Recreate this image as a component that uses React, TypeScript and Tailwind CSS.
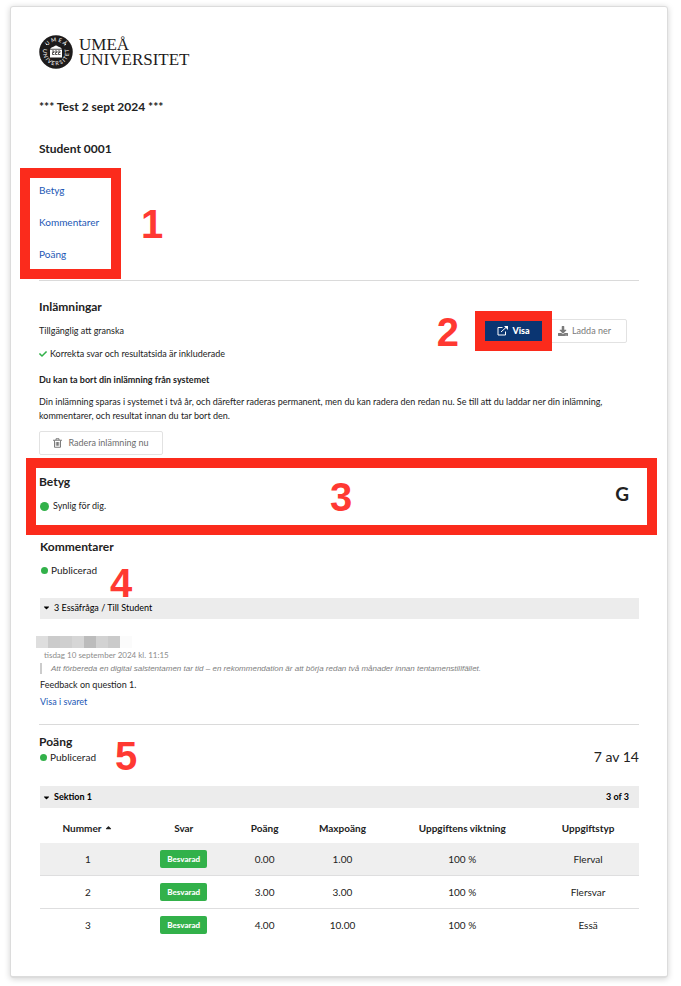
import type { ReactNode } from "react";
import { FaCaretDown, FaCaretUp, FaCheck, FaDownload } from "react-icons/fa";

const rows = [
  { nr: "1", points: "0.00", max: "1.00", weight: "100 %", type: "Flerval", cls: "bg-[#efefef] *:border-[#dededf]" },
  { nr: "2", points: "3.00", max: "3.00", weight: "100 %", type: "Flersvar", cls: "*:border-[#dededf]" },
  { nr: "3", points: "4.00", max: "10.00", weight: "100 %", type: "Essä", cls: "*:border-transparent" },
];

const pixels = ["bg-[#dedede]", "bg-[#cbcbcb]", "bg-[#cfcfcf]", "bg-[#d6d6d6]", "bg-[#bcbcbc]", "bg-[#d2d2d2]", "bg-[#cacaca]", "bg-[#fbfbfb]"];

function Seal() {
  return (
    <svg viewBox="0 0 68 68" className="size-[34px] shrink-0" role="img" aria-label="Umeå universitet">
      <defs>
        <path id="arcTop" d="M13 34a21 21 0 0 1 42 0" />
        <path id="arcBottom" d="M10.700 23a26 26 0 1 0 46.600 0" />
      </defs>
      <circle cx="34" cy="34" r="33.5" fill="#1d1b1b" />
      <text fill="#fff" fontSize="11" fontFamily="Lato, sans-serif" textAnchor="middle">
        <textPath href="#arcTop" startOffset="50%">U M E Å</textPath>
      </text>
      <text fill="#fff" fontSize="11" fontFamily="Lato, sans-serif" textAnchor="middle">
        <textPath href="#arcBottom" startOffset="50%">U N I V E R S I T E T</textPath>
      </text>
      <path d="M22 28q2-4 8-5 4-4 8 0 6 1 8 5v17H22z" fill="#fff" />
      <path d="M22 28.500h24M26 32h4v3h-3v4h4M32 32h4v3h-3v4h4M38 32h4v3h-3v4h4" stroke="#1d1b1b" strokeWidth="1.500" fill="none" />
      <circle cx="15" cy="19" r="1.200" fill="#fff" />
      <circle cx="53" cy="19" r="1.200" fill="#fff" />
    </svg>
  );
}

function TrashIcon() {
  return (
    <svg viewBox="0 0 18 20" className="h-[10px] w-[9px]" fill="none" stroke="currentColor" strokeWidth="1.800" aria-hidden="true">
      <path d="M0 4.500h18M6 4V1.500h6V4M3 5v13.500h12V5M6.500 8v7.500M9 8v7.500M11.500 8v7.500" />
    </svg>
  );
}

function OpenIcon() {
  return (
    <svg viewBox="0 0 22 20" className="h-[10px] w-[11px]" fill="none" stroke="currentColor" strokeWidth="2" aria-hidden="true">
      <path d="M11 3H2v15h15v-7M8 12 19 2" />
      <path d="M14 0h8v8z" fill="currentColor" stroke="none" />
    </svg>
  );
}

function Mark({ className, children }: { className: string; children: ReactNode }) {
  return (
    <span className={`absolute font-[Liberation_Sans,Arial,sans-serif] text-[40px] leading-[40px] font-bold text-[#ff3932] ${className}`}>
      {children}
    </span>
  );
}

function Frame({ className }: { className: string }) {
  return <div aria-hidden="true" className={`pointer-events-none absolute border-10 border-[#fb2b1c] ${className}`} />;
}

function Status({ children }: { children: ReactNode }) {
  return (
    <p className="flex items-center gap-[3px] pl-px text-[10px]">
      <span className="size-[7px] rounded-full bg-[#32b14a]" />
      {children}
    </p>
  );
}

export default function App() {
  return (
    <div className="bg-white pt-[6px] pr-[13px] pb-[9px] pl-[10px] font-[Lato,sans-serif] text-[9px] leading-4 text-[#222]">
      <main className="rounded-[3px] border border-b-2 border-[#dcdcdc] px-7 pt-7 pb-[34px] shadow-[0_1px_6px_rgba(0,0,0,0.18)]">
        <header>
          <div className="flex items-center gap-[6px]">
            <Seal />
            <div className="font-[Liberation_Serif,serif] text-[17px] leading-[15px] text-[#1d1b1b]">
              UMEÅ
              <br />
              UNIVERSITET
            </div>
          </div>
          <h1 className="mt-[30px] text-[12px] font-bold">*** Test 2 sept 2024 ***</h1>
          <h2 className="mt-[26px] text-[12px] font-bold">Student 0001</h2>
        </header>

        <nav className="relative mt-[25px] flex flex-col items-start gap-4 text-[10px] text-[#1c57b5]">
          <a href="#betyg">Betyg</a>
          <a href="#kommentarer">Kommentarer</a>
          <a href="#poang">Poäng</a>
          <Frame className="-top-[14px] -left-[19px] h-[111px] w-[101px]" />
          <Mark className="top-[22px] left-[102px]">1</Mark>
        </nav>

        <hr className="mt-[18px] border-[#dadada]" />

        <section className="relative mt-[18px]">
          <h2 className="text-[12px] font-bold">Inlämningar</h2>
          <p className="mt-2">Tillgänglig att granska</p>
          <p className="mt-[7px] flex items-center gap-[3px]">
            <FaCheck className="size-2 text-[#32b14a]" />
            Korrekta svar och resultatsida är inkluderade
          </p>
          <h3 className="mt-[10px] font-bold">Du kan ta bort din inlämning från systemet</h3>
          <p className="mt-[7px] leading-[14px]">
            Din inlämning sparas i systemet i två år, och därefter raderas permanent, men du kan radera den redan nu. Se till att du laddar ner din inlämning, kommentarer, och resultat innan du tar bort den.
          </p>
          <button className="mt-2 flex h-6 w-[124px] items-center justify-center gap-[6px] rounded-[2px] border border-[#e2e2e2] text-[#6d6d6d]">
            <TrashIcon />
            Radera inlämning nu
          </button>
          <div className="absolute top-5 right-3 flex items-center">
            <div className="relative">
              <button className="flex h-5 w-[57px] items-center justify-center gap-1 bg-[#0a3572] font-black text-white">
                <OpenIcon />
                Visa
              </button>
              <Frame className="-inset-[10px]" />
            </div>
            <button className="flex h-6 w-[85px] items-center justify-center gap-1 rounded-[2px] border border-[#e2e2e2] text-[#7a7a7a]">
              <FaDownload className="size-[10px]" />
              Ladda ner
            </button>
          </div>
          <Mark className="top-[13px] right-[180px]">2</Mark>
        </section>

        <section id="betyg" className="relative mt-[19px] flex items-center justify-between">
          <div>
            <h2 className="text-[12px] font-bold">Betyg</h2>
            <p className="mt-2 flex items-center gap-1 pl-px">
              <span className="size-[9px] rounded-full bg-[#32b14a]" />
              Synlig för dig.
            </p>
          </div>
          <strong className="pr-[10px] text-[19px]">G</strong>
          <Frame className="-top-4 -right-[18px] -left-[13px] h-[77px]" />
          <Mark className="top-[3px] left-[291px]">3</Mark>
        </section>

        <section id="kommentarer" className="relative mt-[25px] pl-px">
          <h2 className="text-[12px] font-bold">Kommentarer</h2>
          <div className="mt-[7px]">
            <Status>Publicerad</Status>
          </div>
          <Mark className="top-[24px] left-[71px]">4</Mark>
          <button className="mt-5 flex h-[21px] w-full items-center gap-[3px] bg-[#ececec] px-[2px] pb-[2px] text-black">
            <FaCaretDown className="size-[9px]" />
            3 Essäfråga / Till Student
          </button>
          <div className="mt-[17px] -ml-1 flex">
            {pixels.map((c, i) => (
              <span key={i} className={`size-3 ${c}`} />
            ))}
          </div>
          <p className="pl-[4px] text-[8px] leading-[15px] text-[#8c8c8c]">tisdag 10 september 2024 kl. 11:15</p>
          <blockquote className="border-l-2 border-[#cccccc] pl-[9px] font-[Liberation_Sans,Arial,sans-serif] text-[8px] leading-[11px] text-[#808080] italic">
            Att förbereda en digital salstentamen tar tid – en rekommendation är att börja redan två månader innan tentamenstillfället.
          </blockquote>
          <p className="mt-[3px]">Feedback on question 1.</p>
          <a href="#svar" className="mt-[1px] block text-[#1c57b5]">Visa i svaret</a>
        </section>

        <hr className="mt-[14px] border-[#dadada]" />

        <section id="poang" className="relative mt-[9px]">
          <div className="flex items-end justify-between">
            <div>
              <h2 className="text-[12px] leading-[15px] font-bold">Poäng</h2>
              <Status>Publicerad</Status>
            </div>
            <span className="text-[14px]">7 av 14</span>
          </div>
          <Mark className="top-[2px] left-[76px]">5</Mark>
          <button className="mt-[21px] ml-px flex h-[22px] w-[calc(100%-1px)] items-center gap-[3px] bg-[#ececec] pr-[10px] pl-[2px] font-bold text-black">
            <FaCaretDown className="size-[9px]" />
            Sektion 1
            <span className="ml-auto">3 of 3</span>
          </button>
          <table className="ml-px w-[calc(100%-1px)] table-fixed border-separate border-spacing-0 text-center text-[10px]">
            <colgroup>
              <col className="w-[16%]" />
              <col className="w-[16%]" />
              <col className="w-[11%]" />
              <col className="w-[15%]" />
              <col className="w-[25%]" />
              <col className="w-[17%]" />
            </colgroup>
            <thead>
              <tr className="h-[35px] *:pt-1 *:font-bold">
                <th>
                  <span className="inline-flex items-center gap-[3px]">
                    Nummer <FaCaretUp className="size-[9px]" />
                  </span>
                </th>
                <th>Svar</th>
                <th>Poäng</th>
                <th>Maxpoäng</th>
                <th>Uppgiftens viktning</th>
                <th>Uppgiftstyp</th>
              </tr>
            </thead>
            <tbody>
              {rows.map((r) => (
                <tr key={r.nr} className={`h-[33px] *:border-b ${r.cls}`}>
                  <td>{r.nr}</td>
                  <td>
                    <span className="inline-flex h-[18px] items-center rounded-[2px] bg-[#32b14a] px-[7px] align-middle text-[8px] font-black text-white">Besvarad</span>
                  </td>
                  <td>{r.points}</td>
                  <td>{r.max}</td>
                  <td>{r.weight}</td>
                  <td>{r.type}</td>
                </tr>
              ))}
            </tbody>
          </table>
        </section>
      </main>
    </div>
  );
}
